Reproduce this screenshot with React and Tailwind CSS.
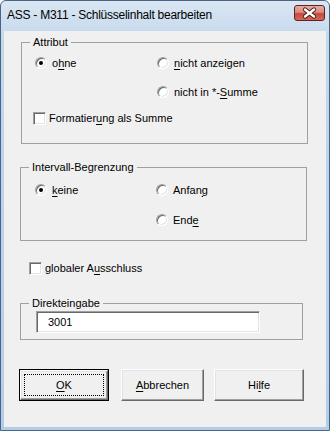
import React from 'react';

const Radio = ({ checked }) => (
  <span className="relative flex h-[12px] w-[12px] shrink-0 items-center justify-center rounded-full border border-t-[#a0a0a0] border-l-[#a0a0a0] border-b-white border-r-white bg-white shadow-[inset_1px_1px_0_#696969,inset_-1px_-1px_0_#e3e3e3]">
    {checked && <span className="h-[4px] w-[4px] rounded-full bg-black" />}
  </span>
);

const Check = () => (
  <span className="h-[13px] w-[13px] shrink-0 border border-t-[#a0a0a0] border-l-[#a0a0a0] border-b-white border-r-white bg-white shadow-[inset_1px_1px_0_#696969,inset_-1px_-1px_0_#e3e3e3]" />
);

// label with one underlined access key
const Label = ({ pre, u, post }) => (
  <span className="whitespace-nowrap">
    {pre}
    <span className="underline underline-offset-[2px]">{u}</span>
    {post}
  </span>
);

const Option = ({ checked, children, width }) => (
  <div className={`flex items-center ${width || ''}`}>
    <Radio checked={checked} />
    <span className="ml-[5px]">{children}</span>
  </div>
);

const Group = ({ title, className, children }) => (
  <fieldset className={`border border-[#a0a0a0] ${className}`}>
    <legend className="ml-[8px] px-[3px] leading-[13px]">{title}</legend>
    {children}
  </fieldset>
);

const Button = ({ children, width, isDefault }) => (
  <button
    className={`flex h-[32px] items-center justify-center bg-[#f0f0f0] ${width} ${
      isDefault ? 'border border-black p-0' : ''
    }`}
  >
    <span className="flex h-full w-full items-center justify-center border border-t-white border-l-white border-b-[#696969] border-r-[#696969] shadow-[inset_-1px_-1px_0_#a0a0a0,inset_1px_1px_0_#e3e3e3]">
      {isDefault ? (
        <span className="flex h-[calc(100%-6px)] w-[calc(100%-6px)] items-center justify-center border border-dotted border-black">
          {children}
        </span>
      ) : (
        children
      )}
    </span>
  </button>
);

export default function App() {
  return (
    <div className="flex h-[431px] w-[330px] flex-col rounded-t-[6px] border border-[#4a6584] bg-[linear-gradient(#dae6f3,#c3d7ec_40px,#b3cde9)] font-['Liberation_Sans',Arial,sans-serif] text-[11px] text-black">
      {/* title bar */}
      <div className="flex h-[30px] shrink-0 items-start justify-between">
        <span className="ml-[6px] mt-[7px] text-[12px] leading-[14px] tracking-[-0.25px] text-black">
          ASS - M311 - Schlüsselinhalt bearbeiten
        </span>
        <span className="mr-[4px] mt-[4px] h-[16px] w-[31px] rounded-[3px] border border-[#5b2320] bg-[linear-gradient(#e6ada5,#d88a80_45%,#c4493e_55%,#d7675b)]">
          <svg width="29" height="14" viewBox="0 0 29 14">
            <path d="M10 3.5 L19 10.5 M19 3.5 L10 10.5" stroke="#4a1a16" strokeWidth="4.2" strokeLinecap="round" />
            <path d="M10 3.5 L19 10.5 M19 3.5 L10 10.5" stroke="#ffffff" strokeWidth="2.4" strokeLinecap="round" />
          </svg>
        </span>
      </div>

      {/* client area */}
      <div className="mx-[3px] mb-[3px] flex-1 bg-[#f0f0f0]">
        <Group title="Attribut" className="ml-[17px] mt-[5px] w-[287px] pb-[17px] pt-[6px]">
          <div className="flex h-[16px] pl-[13px]">
            <Option checked width="w-[122px]">
              <Label pre="o" u="h" post="ne" />
            </Option>
            <Option>
              <Label pre="" u="n" post="icht anzeigen" />
            </Option>
          </div>
          <div className="mt-[13px] flex h-[16px] pl-[135px]">
            <Option>
              <Label pre="nicht in *-" u="S" post="umme" />
            </Option>
          </div>
          <div className="mt-[10px] flex h-[16px] items-center pl-[11px]">
            <Check />
            <span className="ml-[3px]">
              <Label pre="Formatier" u="u" post="ng als Summe" />
            </span>
          </div>
        </Group>

        <Group title="Intervall-Begrenzung" className="ml-[16px] mt-[17px] w-[287px] pb-[12px] pt-[8px]">
          <div className="flex h-[16px] pl-[14px]">
            <Option checked width="w-[121px]">
              <Label pre="" u="k" post="eine" />
            </Option>
            <Option>
              <Label pre="Anfan" u="g" post="" />
            </Option>
          </div>
          <div className="mt-[14px] flex h-[16px] pl-[135px]">
            <Option>
              <Label pre="End" u="e" post="" />
            </Option>
          </div>
        </Group>

        <div className="ml-[25px] mt-[19px] flex h-[16px] items-center">
          <Check />
          <span className="ml-[3px]">
            <Label pre="globaler A" u="u" post="sschluss" />
          </span>
        </div>

        <Group title="Direkteingabe" className="ml-[16px] mt-[21px] w-[283px] pb-[6px] pt-[1px]">
          <div className="ml-[15px] flex h-[22px] w-[224px] items-center border border-t-[#a0a0a0] border-l-[#a0a0a0] border-b-white border-r-white bg-white pl-[11px] shadow-[inset_1px_1px_0_#696969,inset_-1px_-1px_0_#e3e3e3]">
            3001
          </div>
        </Group>

        <div className="ml-[15px] mt-[29px] flex">
          <Button width="w-[90px]" isDefault>
            <Label pre="" u="O" post="K" />
          </Button>
          <div className="ml-[12px]">
            <Button width="w-[83px]">
              <Label pre="" u="A" post="bbrechen" />
            </Button>
          </div>
          <div className="ml-[10px]">
            <Button width="w-[90px]">
              <Label pre="Hi" u="l" post="fe" />
            </Button>
          </div>
        </div>
      </div>
    </div>
  );
}
